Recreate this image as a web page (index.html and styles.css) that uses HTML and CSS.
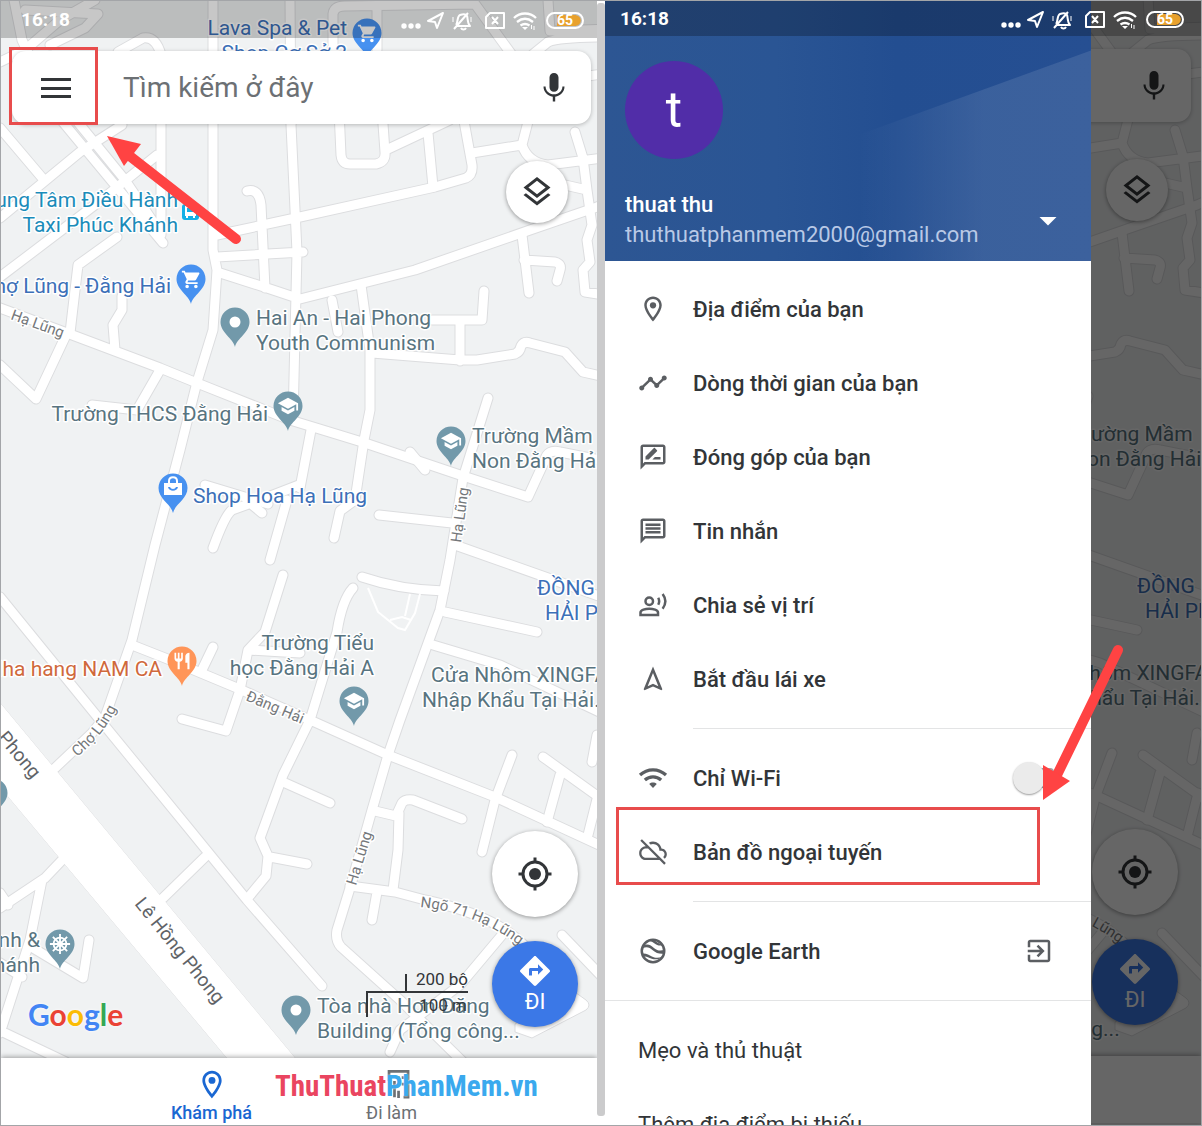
FILE: index.html
```html
<!DOCTYPE html>
<html lang="vi">
<head>
<meta charset="utf-8">
<meta name="viewport" content="width=device-width, initial-scale=1">
<title>Bản đồ ngoại tuyến</title>
<link rel="stylesheet" href="styles.css">
</head>
<body>
<svg class="sprite" aria-hidden="true">
  <defs>
    <symbol id="i-place" viewBox="0 0 24 24"><path d="M12 2C8.13 2 5 5.13 5 9c0 5.25 7 13 7 13s7-7.75 7-13c0-3.87-3.13-7-7-7zM7 9c0-2.76 2.24-5 5-5s5 2.24 5 5c0 2.88-2.88 7.19-5 9.88C9.92 16.21 7 11.85 7 9z"/><circle cx="12" cy="9" r="2.5"/></symbol>
    <symbol id="i-timeline" viewBox="0 0 24 24"><path d="M23 8c0 1.1-.9 2-2 2-.18 0-.35-.02-.51-.07l-3.56 3.55c.05.16.07.34.07.52 0 1.1-.9 2-2 2s-2-.9-2-2c0-.18.02-.36.07-.52l-2.55-2.55c-.16.05-.34.07-.52.07s-.36-.02-.52-.07l-4.55 4.56c.05.16.07.33.07.51 0 1.1-.9 2-2 2s-2-.9-2-2 .9-2 2-2c.18 0 .35.02.51.07l4.56-4.55C8.02 9.36 8 9.18 8 9c0-1.1.9-2 2-2s2 .9 2 2c0 .18-.02.36-.07.52l2.55 2.55c.16-.05.34-.07.52-.07s.36.02.52.07l3.55-3.56C19.02 8.35 19 8.18 19 8c0-1.1.9-2 2-2s2 .9 2 2z"/></symbol>
    <symbol id="i-review" viewBox="0 0 24 24"><path d="M20 2H4c-1.1 0-2 .9-2 2v18l4-4h14c1.1 0 2-.9 2-2V4c0-1.1-.9-2-2-2zm0 14H5.2L4 17.2V4h16v12z"/><path d="M6 14v-2.5l6.7-6.7c.2-.2.6-.2.8 0l1.7 1.7c.2.2.2.6 0 .8L8.5 14zM11.500 14l2-2H18v2z"/></symbol>
    <symbol id="i-message" viewBox="0 0 24 24"><path d="M4 4h16v12H5.17L4 17.17V4m0-2c-1.1 0-1.99.9-1.99 2L2 22l4-4h14c1.1 0 2-.9 2-2V4c0-1.1-.9-2-2-2H4zm2 10h12v2H6v-2zm0-3h12v2H6V9zm0-3h12v2H6V6z"/></symbol>
    <symbol id="i-share" viewBox="0 0 24 24"><g fill="none" stroke="currentColor" stroke-width="2"><circle cx="9" cy="9" r="3"/><path d="M2 20v-2c0-2 4-3 7-3s7 1 7 3v2z"/><path d="M16.200 6.200c.9 1.700.9 3.900 0 5.600M19.700 3.200c2.700 3.600 2.700 8.100 0 11.700"/></g></symbol>
    <symbol id="i-drive" viewBox="0 0 24 24"><path d="M12 7.270l4.280 10.430-3.470-1.530-.81-.36-.81.36-3.470 1.530L12 7.270M12 2L4.500 20.290l.71.71L12 18l6.790 3 .71-.71L12 2z"/></symbol>
    <symbol id="i-wifi" viewBox="0 0 24 24"><g fill="none" stroke="currentColor" stroke-width="2.600"><path d="M1.600 9.600C7.600 4 16.400 4 22.400 9.600M5.500 13.600c3.700-3.400 9.300-3.400 13 0"/></g><path d="M9 16.800c1.700-1.500 4.300-1.500 6 0L12 20z"/></symbol>
    <symbol id="i-cloud-off" viewBox="-1 0 26 26"><path d="M24 15c0-2.640-2.050-4.780-4.650-4.960C18.670 6.590 15.640 4 12 4c-1.330 0-2.570.36-3.650.97l1.490 1.490C10.510 6.170 11.230 6 12 6c3.040 0 5.500 2.460 5.500 5.500v.5H19c1.660 0 3 1.340 3 3 0 .99-.48 1.850-1.210 2.400l1.410 1.410C23.290 17.890 24 16.540 24 15zM2.400 1.850L1 3.260l4.770 4.780h-.42C2.340 8.360 0 10.910 0 14c0 3.310 2.690 6 6 6h11.730l4 4 1.410-1.410zM6 18c-2.210 0-4-1.790-4-4s1.790-4 4-4h1.730l8 8H6z"/></symbol>
    <symbol id="i-earth" viewBox="0 0 24 24"><circle cx="12" cy="12" r="9" fill="none" stroke="currentColor" stroke-width="2"/><path d="M3.500 8C8 5.500 10 7.500 13 9.800s5.500 2.400 8.500.7l-.3 3.500c-4 .6-6.700-.5-9.400-2.700S7 8.200 3.500 9.900zM8 3.200c3.500-.6 5.300.6 7.600 1.900s3.600 1.400 4 2.300c-2.500.7-4.300.1-6.600-1.600S9.700 3.900 8 3.200zM2.800 14c3.700-.5 6 1 8.300 2.300s4.900 1.600 8.400.3c-2 2-5.500 2.600-8.500 1.600s-4.600-2.200-6.400-1.600z"/></symbol>
    <symbol id="i-exit" viewBox="0 0 24 24"><path d="M19 3H5c-1.110 0-2 .9-2 2v4h2V5h14v14H5v-4H3v4c0 1.100.89 2 2 2h14c1.100 0 2-.9 2-2V5c0-1.100-.9-2-2-2zM10.090 15.590L11.500 17l5-5-5-5-1.410 1.410L12.670 11H3v2h9.670l-2.580 2.590z"/></symbol>
    <symbol id="i-mic" viewBox="0 0 24 24"><path d="M12 14.500c1.700 0 3-1.340 3-3V5c0-1.660-1.300-3-3-3S9 3.340 9 5v6.500c0 1.660 1.300 3 3 3zM17.600 11c0 3-2.500 5.200-5.600 5.200S6.400 14 6.400 11H5c0 3.500 2.700 6.300 6.200 6.800V21h1.600v-3.200c3.500-.5 6.200-3.300 6.200-6.800z"/></symbol>
    <symbol id="i-layers" viewBox="0 0 24 24"><path d="M11.990 18.540l-7.370-5.730L3 14.070l9 7 9-7-1.630-1.270zM12 16l7.360-5.730L21 9l-9-7-9 7 1.630 1.270L12 16zm0-11.470L17.740 9 12 13.470 6.260 9 12 4.530z"/></symbol>
    <symbol id="i-locate" viewBox="0 0 24 24"><circle cx="12" cy="12" r="4"/><g fill="none" stroke="currentColor" stroke-width="2"><circle cx="12" cy="12" r="8"/><path d="M12 1v3M12 20v3M1 12h3M20 12h3"/></g></symbol>
    <symbol id="i-go" viewBox="0 0 24 24"><path d="M21.710 11.290l-9-9c-.39-.39-1.020-.39-1.410 0l-9 9c-.39.39-.39 1.020 0 1.410l9 9c.39.39 1.020.39 1.410 0l9-9c.39-.38.39-1.010 0-1.410zM14 14.500V12h-4v3H8v-4c0-.55.45-1 1-1h5V7.500l3.500 3.500-3.500 3.500z"/></symbol>
    <symbol id="i-building" viewBox="0 0 24 32"><path d="M1 12V1.500h21V30h-5M7 30V12" fill="none" stroke="currentColor" stroke-width="3"/><path d="M10 7h3v3h-3zM15 7h3v3h-3zM10 14h3v3h-3zM15 14h3v3h-3zM10 23h3v8h-3z"/></symbol>
    <symbol id="i-cart" viewBox="0 0 24 24"><path d="M7 18c-1.100 0-2 .9-2 2s.9 2 2 2 2-.9 2-2-.9-2-2-2zM1 2v2h2l3.600 7.590L5.250 14c-.9 1.500.2 3 1.750 3h12v-2H7.400l.8-2h7.400c.75 0 1.400-.4 1.750-1l3.600-6.500c.4-.7-.1-1.500-.95-1.500H5.210l-.94-2H1zm16 16c-1.100 0-2 .9-2 2s.9 2 2 2 2-.9 2-2-.9-2-2-2z"/></symbol>
    <symbol id="i-school" viewBox="0 0 24 24"><path d="M5 13.180v4L12 21l7-3.820v-4L12 17l-7-3.820zM12 3L1 9l11 6 9-4.910V17h2V9L12 3z"/></symbol>
    <symbol id="i-food" viewBox="0 0 24 24"><path d="M11 9H9V2H7v7H5V2H3v7c0 2.120 1.660 3.840 3.750 3.970V22h2.500v-9.030C11.340 12.840 13 11.120 13 9V2h-2v7zm5-3v8h2.500v8H21V2c-2.760 0-5 2.240-5 4z"/></symbol>
    <symbol id="i-bag" viewBox="0 0 24 24"><path fill-rule="evenodd" d="M3 9h18v12H3zM7 13c1 5 9 5 10 0h-2c-1 2.500-5 2.500-6 0z"/><path d="M8 9V7c0-5 8-5 8 0v2" fill="none" stroke="currentColor" stroke-width="2"/></symbol>
    <symbol id="i-wheel" viewBox="0 0 24 24"><g fill="none" stroke="currentColor" stroke-width="2"><circle cx="12" cy="12" r="7"/><path d="M12 1v22M1 12h22M4.200 4.200l15.600 15.600M19.800 4.200L4.200 19.800"/></g><circle cx="12" cy="12" r="3"/></symbol>

    <symbol id="status-icons" viewBox="0 0 186 20" overflow="visible">
      <g fill="currentColor"><circle cx="4" cy="16" r="2.700"/><circle cx="11" cy="16" r="2.700"/><circle cx="18" cy="16" r="2.700"/></g>
      <g fill="none" stroke="currentColor" stroke-width="2" stroke-linejoin="round">
        <path d="M28 11L43 3l-6 15-2-6z"/>
        <path d="M56 15c2-2 1-9 4-10s6-1 7 1 0 7 3 10H57M61 18c1 2 4 2 5 0M54 19L68 3"/>
        <path d="M53 7v5M71 7v5" stroke-width="1"/>
        <path d="M90 3h14v15H86V7zM92 7l6 7M98 7l-6 7"/>
        <path d="M114 8c6-6 16-6 22 0M117 12c5-4 11-4 16 0M120.500 15.500c3-2 6-2 9 0" stroke-width="2.300"/>
      </g>
      <path d="M122 17h6l-3 3zM131 15h1v4h-1zM133.500 16h1v4h-1z" fill="currentColor"/>
      <path d="M157 5h17c9 0 9 11 0 11h-17z" fill="#e8a12d"/>
      <rect x="147" y="3" width="36" height="15" rx="7.500" fill="none" stroke="currentColor" stroke-width="2"/>
      <text class="battery-level" x="165" y="15" text-anchor="middle">65</text>
    </symbol>

    <path id="pin" d="M0 25C-2 16-14.500 11-14.500 0a14.500 14.500 0 0 1 29 0C14.500 11 2 16 0 25z"/>
    <path id="ngo-71" d="M420 907Q484 914 530 954"/>
    <path id="cho-lung" d="M77 757Q108 731 119 702"/>

    <g id="roads">
      <path d="M14 0L22 40L57 115L163 243M72 115L125 180L160 232M0 62L25 50L60 20L95 0M25 10L98 14L85 28L50 45M0 128L44 180M0 218L80 152L122 125M0 277L100 201L157 155M118 52L143 38Q156 36 161 55L161 235M117 237L78 265L75 290L70 333"/>
      <path d="M213 0L213 250L217 270L213 330L197 382L180 450L155 545L132 640L105 717L92 733L55 768M247 191Q259 188 261 205L265 288M290 0L291 125L297 252L293 420M217 257L303 252M217 235L300 217L435 187L466 178Q473 175 472 165L462 110M217 272L267 288L300 299L415 270L530 230L597 207L608 202"/>
      <path d="M333 60L333 14Q334 6 345 6L475 4L512 55M377 10L377 50M339 110L341 155Q342 164 350 164L376 164Q386 162 385 152L382 110M386 150L450 120M428 133L433 187M472 153L522 145M531 110L522 145Q528 163 548 165L610 157M575 132L583 158L587 190L592 225L587 240L590 262L583 270L585 292L610 296M565 185L587 190M548 0L550 31L610 29M532 55L548 42Q560 37 610 37M588 76L610 73"/>
      <path d="M522 235L529 293M524 260L555 262Q562 264 560 270L557 281M432 320L482 320L484 291M460 320L460 361M372 353L460 360L477 360L515 354Q520 352 521 346Q524 341 530 343L565 352L583 372L610 378M361 285L370 350L370 410L364 440L355 500L340 511L334 538M332 300L338 332M488 398L463 478L450 560L440 610L400 720L388 755L372 810L350 888L337 930Q335 940 341 947L400 1000L463 1062M379 515L452 523"/>
      <path d="M0 308L67 333L160 368L197 383L290 420L313 427L362 442L460 475L528 497L545 460Q547 449 560 452L610 462M67 333L36 399L0 365M122 296L122 310L113 325L115 350M160 370L137 410L92 405M311 430L300 488M299 485L268 497L232 510Q225 515 213 548M287 500L270 560M250 503L262 513"/>
      <path d="M455 545L610 600M362 577Q400 590 444 591M445 612L537 632M433 645L500 665L610 717M353 588Q342 600 337 632L310 720L283 775L260 838L268 856L266 876L247 899M270 857L307 864M132 645L165 658L237 688L310 720L388 755L495 797L610 850M213 647L201 672M283 575L265 632L248 650L240 690L226 731L182 719M248 650L300 653M283 782L330 803"/>
      <path d="M0 597L100 720L190 830L247 900L322 986M163 898L205 857M512 755L495 800L482 852M543 757L610 805M560 775L547 822M597 735L592 762M598 795L588 835M375 811L396 816L402 803Q405 799 413 800L462 819M399 813L398 850L393 890M350 886L395 892L425 900Q495 915 525 946M377 892L372 920M502 935L460 985L400 1030L390 1052M562 935L610 985M425 470L410 452M205 485L268 504"/>
      <path d="M65 857L45 878L0 908M42 880L30 940L0 1033M0 893L8 905M33 948L83 978L89 940M0 963L22 977M5 1033L66 1062"/>
    </g>

    <g id="city-map">
      <rect class="land" width="620" height="1130"/>
      <use href="#roads" class="road-casing"/>
      <path class="avenue" d="M-4 698L295 1058L300 1064L232 1064L-4 782z"/>
      <use href="#roads" class="road-surface"/>
      <path class="avenue-fill" d="M-4 698L300 1064L232 1064L-4 782z"/>
      <path class="avenue" d="M515 1024V1032L532 1038L586 1010Q592 1005 586 1000L572 990z"/>
      <path class="footpath" d="M368 588L378 612L398 628L405 630L415 613L420 594M390 620L402 617L411 620M405 616L410 594"/>

      <g class="street">
        <text transform="translate(10 319) rotate(20)">Hạ Lũng</text>
        <text transform="translate(461 543) rotate(-82)">Hạ Lũng</text>
        <text transform="translate(245 700) rotate(23)">Đằng Hải</text>
        <text><textPath href="#cho-lung">Chợ Lũng</textPath></text>
        <text transform="translate(356 886) rotate(-73)">Hạ Lũng</text>
        <text><textPath href="#ngo-71">Ngõ 71 Hạ Lũng</textPath></text>
      </g>
      <g class="street street-major">
        <text transform="translate(-3 738) rotate(50)">Phong</text>
        <text transform="translate(134 904) rotate(51)">Lê Hồng Phong</text>
      </g>

      <g class="poi shop">
        <text x="347" y="35" text-anchor="end">Lava Spa &amp; Pet</text>
        <text x="347" y="60" text-anchor="end">Shop Cơ Sở 2</text>
        <text x="171" y="293" text-anchor="end">Chợ Lũng - Đằng Hải</text>
        <text x="193" y="503">Shop Hoa Hạ Lũng</text>
        <text x="537" y="595">ĐỒNG</text>
        <text x="545" y="620">HẢI PHÒNG</text>
      </g>
      <g class="poi transit">
        <text x="178" y="207" text-anchor="end">Trung Tâm Điều Hành</text>
        <text x="178" y="232" text-anchor="end">Taxi Phúc Khánh</text>
      </g>
      <g class="poi place">
        <text x="256" y="325">Hai An - Hai Phong</text>
        <text x="256" y="350">Youth Communism</text>
        <text x="268" y="421" text-anchor="end">Trường THCS Đằng Hải</text>
        <text x="472" y="443">Trường Mầm</text>
        <text x="472" y="468">Non Đằng Hải</text>
        <text x="374" y="650" text-anchor="end">Trường Tiểu</text>
        <text x="374" y="675" text-anchor="end">học Đằng Hải A</text>
        <text x="431" y="682">Cửa Nhôm XINGFA</text>
        <text x="422" y="707">Nhập Khẩu Tại Hải...</text>
        <text x="40" y="947" text-anchor="end">Bình &amp;</text>
        <text x="40" y="972" text-anchor="end">Khánh</text>
        <text x="317" y="1013">Tòa nhà Hơn Đăng</text>
        <text x="317" y="1038">Building (Tổng công...</text>
      </g>
      <g class="poi food"><text x="162" y="676" text-anchor="end">Nha hang NAM CA</text></g>

      <g class="pin-shop">
        <use href="#pin" x="367" y="33"/><use href="#pin" x="191" y="279"/><use href="#pin" x="173" y="488"/>
      </g>
      <g class="pin-place">
        <use href="#pin" x="235" y="322"/><use href="#pin" x="288" y="406"/><use href="#pin" x="451" y="441"/><use href="#pin" x="354" y="701"/><use href="#pin" x="60" y="944"/><use href="#pin" x="296" y="1010"/><use href="#pin" x="-7" y="793"/>
      </g>
      <g class="pin-food"><use href="#pin" x="182" y="661"/></g>
      <rect class="pin-transit" x="182" y="204" width="17" height="16" rx="3"/>
      <g class="pin-glyph">
        <path d="M185 206h11v10h-1v2h-2v-2h-5v2h-2v-2h-1z"/>
        <use href="#i-cart" x="357" y="23" width="21" height="21"/>
        <use href="#i-cart" x="181" y="269" width="21" height="21"/>
        <use href="#i-bag" x="161" y="474" width="24" height="24"/>
        <circle cx="235" cy="322" r="5.500"/><circle cx="296" cy="1010" r="5.500"/>
        <use href="#i-school" x="277" y="395" width="22" height="22"/>
        <use href="#i-school" x="440" y="430" width="22" height="22"/>
        <use href="#i-school" x="343" y="690" width="22" height="22"/>
        <use href="#i-food" x="172" y="651" width="20" height="20"/>
        <use href="#i-wheel" x="49" y="933" width="22" height="22"/>
      </g>
      <path class="transit-window" d="M187 208h7v4h-7z"/>
    </g>
  </defs>
</svg>

<div class="screens">
  <section class="phone">
    <div class="app">
      <svg class="map" role="img" aria-label="Bản đồ Đằng Hải, Hải Phòng"><use href="#city-map" x="-1" y="-1"/></svg>
      <header class="status status-light">
        <time>16:18</time>
        <svg class="status-icons"><use href="#status-icons"/></svg>
      </header>
      <form class="search">
        <button class="search-menu marked" type="button" aria-label="Menu"><span class="bars"></span></button>
        <input class="search-field" type="text" placeholder="Tìm kiếm ở đây" aria-label="Tìm kiếm">
        <button class="search-mic" type="button" aria-label="Giọng nói"><svg class="icon-large"><use href="#i-mic"/></svg></button>
      </form>
      <div class="controls">
        <button class="round round-small" aria-label="Lớp bản đồ"><svg class="icon-large"><use href="#i-layers"/></svg></button>
        <div class="controls-bottom">
          <div class="google"><span class="g-blue">G</span><span class="g-red">o</span><span class="g-yellow">o</span><span class="g-blue">g</span><span class="g-green">l</span><span class="g-red">e</span></div>
          <div class="scale"><span class="scale-feet">200 bộ</span><span class="scale-metres">100 m</span></div>
          <div class="round-stack">
            <button class="round" aria-label="Vị trí của tôi"><svg class="icon-large"><use href="#i-locate"/></svg></button>
            <button class="round round-go"><svg class="icon-large"><use href="#i-go"/></svg><span>ĐI</span></button>
          </div>
        </div>
      </div>
      <nav class="tabs">
        <a class="tab tab-active" href="#explore"><svg class="icon-large"><use href="#i-place"/></svg>Khám phá</a>
        <a class="tab" href="#commute"><svg class="icon-large icon-building"><use href="#i-building"/></svg>Đi làm</a>
        <div class="watermark"><span class="mark-red">ThuThuat</span><span class="mark-blue">PhanMem.vn</span></div>
      </nav>
      <svg class="arrow arrow-menu" viewBox="0 0 140 112" aria-hidden="true"><path d="M24 21L129 103" class="arrow-shaft"/><path d="M0 0L34 8L17 30z" class="arrow-head"/></svg>
    </div>
  </section>

  <div class="scrollbar"></div>

  <section class="phone">
    <div class="app app-behind">
      <svg class="map" aria-hidden="true"><use href="#city-map" x="-1" y="-1"/></svg>
      <div class="status"></div>
      <div class="search">
        <button class="search-mic" type="button" aria-label="Giọng nói"><svg class="icon-large"><use href="#i-mic"/></svg></button>
      </div>
      <div class="controls">
        <button class="round round-small" aria-label="Lớp bản đồ"><svg class="icon-large"><use href="#i-layers"/></svg></button>
        <div class="controls-bottom">
          <div class="round-stack">
            <button class="round" aria-label="Vị trí của tôi"><svg class="icon-large"><use href="#i-locate"/></svg></button>
            <button class="round round-go"><svg class="icon-large"><use href="#i-go"/></svg><span>ĐI</span></button>
          </div>
        </div>
      </div>
      <div class="tabs"></div>
    </div>
    <div class="scrim"></div>
    <aside class="drawer">
      <header class="account">
        <div class="avatar">t</div>
        <div class="account-row">
          <div>
            <div class="account-name">thuat thu</div>
            <div class="account-mail">thuthuatphanmem2000@gmail.com</div>
          </div>
          <button class="account-switch" aria-label="Chuyển tài khoản"></button>
        </div>
      </header>
      <ul class="menu">
        <li><a href="#places"><svg class="icon"><use href="#i-place"/></svg>Địa điểm của bạn</a></li>
        <li><a href="#timeline"><svg class="icon"><use href="#i-timeline"/></svg>Dòng thời gian của bạn</a></li>
        <li><a href="#contribute"><svg class="icon"><use href="#i-review"/></svg>Đóng góp của bạn</a></li>
        <li><a href="#messages"><svg class="icon"><use href="#i-message"/></svg>Tin nhắn</a></li>
        <li><a href="#share"><svg class="icon"><use href="#i-share"/></svg>Chia sẻ vị trí</a></li>
        <li><a href="#drive"><svg class="icon"><use href="#i-drive"/></svg>Bắt đầu lái xe</a></li>
      </ul>
      <ul class="menu menu-inset">
        <li><label for="wifi-only"><svg class="icon"><use href="#i-wifi"/></svg>Chỉ Wi-Fi<input class="toggle" id="wifi-only" type="checkbox"></label></li>
        <li class="marked"><a href="#offline"><svg class="icon"><use href="#i-cloud-off"/></svg>Bản đồ ngoại tuyến</a></li>
      </ul>
      <ul class="menu menu-inset">
        <li><a href="#earth"><svg class="icon"><use href="#i-earth"/></svg>Google Earth<svg class="icon icon-end"><use href="#i-exit"/></svg></a></li>
      </ul>
      <ul class="menu menu-plain">
        <li><a href="#tips">Mẹo và thủ thuật</a></li>
        <li><a href="#missing">Thêm địa điểm bị thiếu</a></li>
      </ul>
    </aside>
    <header class="status status-over">
      <time>16:18</time>
      <svg class="status-icons"><use href="#status-icons"/></svg>
    </header>
    <svg class="arrow arrow-offline" viewBox="0 0 86 160" aria-hidden="true"><path d="M14 133L75 8" class="arrow-shaft"/><path d="M0 158V123L27 139z" class="arrow-head"/></svg>
  </section>
</div>
</body>
</html>
```
FILE: styles.css
```css
* { box-sizing: border-box; }

body {
  margin: 0;
  font-family: Roboto, "Noto Sans", sans-serif;
  color: #323538;
}

button { border: 0; padding: 0; background: none; font: inherit; color: inherit; }
a { color: inherit; text-decoration: none; }
svg { fill: currentColor; display: block; }
.sprite { position: absolute; width: 0; height: 0; }

.screens {
  display: grid;
  grid-template-columns: 1fr 8px 1fr;
  height: 100vh;
  overflow: hidden;
  border: 1px solid #a3a5a8;
  background: #fff;
}
.scrollbar { margin: 2px 0 9px; border-radius: 3px; background: #cbcbcc; }
.phone { position: relative; min-width: 0; overflow: hidden; background: #fff; }
.app { position: relative; display: flex; flex-direction: column; height: 100%; }
.app-behind { position: absolute; inset: -2px 4px 2px -4px; height: auto; }

/* Status bar */
.status {
  position: relative;
  flex: none;
  display: flex;
  justify-content: space-between;
  align-items: center;
  height: 37px;
  padding: 0 11px 0 20px;
  color: #fff;
}
.status time { font-size: 19px; font-weight: 700; }
.status-light { background: rgba(0, 0, 0, .22); }
.status-over { position: absolute; inset: 0 0 auto; height: 35px; padding: 0 15px; background: rgba(0, 0, 0, .25); }
.status-icons { width: 186px; height: 20px; overflow: visible; }
.battery-level { font-size: 14px; font-weight: 700; }

/* Search box */
.search {
  position: relative;
  flex: none;
  display: flex;
  align-items: center;
  height: 73px;
  margin: 13px 6px 0 11px;
  border-radius: 14px;
  background: #fff;
  box-shadow: 0 1px 4px rgba(0, 0, 0, .25);
}
.search-menu { position: relative; width: 88px; height: 73px; padding-left: 29px; }
.search-menu.marked::after { inset: -4px 2px -1px -3px; }
.bars { display: block; width: 30px; height: 20px; border: solid #323538; border-width: 3px 0; }
.bars::after { content: ""; display: block; height: 3px; margin-top: 6px; background: #323538; }
.search-field {
  flex: 1;
  min-width: 0;
  height: 60px;
  margin-left: 23px;
  padding: 0;
  border: 0;
  outline: 0;
  background: none;
  font: 400 28px Roboto, "Noto Sans", sans-serif;
}
.search-field::placeholder { color: #6c7074; opacity: 1; }
.search-mic { margin: 0 19px 0 auto; }
.icon-large { width: 36px; height: 36px; }

/* Floating map controls */
.controls { position: relative; flex: 1; display: flex; flex-direction: column; padding: 37px 19px 31px 27px; }
.controls-bottom { display: flex; align-items: flex-end; justify-content: flex-end; margin-top: auto; }
.round {
  display: flex;
  flex-direction: column;
  align-items: center;
  justify-content: center;
  width: 86px;
  height: 86px;
  border-radius: 50%;
  background: #fff;
  box-shadow: 0 1px 4px rgba(0, 0, 0, .4);
}
.round-small { width: 62px; height: 62px; align-self: flex-end; margin-right: 10px; }
.round-stack { display: grid; gap: 24px; }
.round-go { background: #3b78e7; color: #fff; font-size: 22px; line-height: 26px; }
.google { margin-right: auto; font-family: Lato, sans-serif; font-size: 30px; line-height: 26px; font-weight: 700; text-shadow: 0 0 3px #fff; }
.g-blue { color: #4285f4; }
.g-red { color: #ea4335; }
.g-yellow { color: #fbbc05; }
.g-green { color: #34a853; }
.scale { display: grid; width: 102px; margin: 0 24px 10px 0; font-size: 17px; line-height: 24px; text-align: right; }
.scale-feet { position: relative; border-bottom: 2px solid #323538; }
.scale-feet::before { content: ""; position: absolute; left: 39px; bottom: 0; height: 17px; border-left: 2px solid #323538; }
.scale-metres { padding-right: 1px; border-left: 2px solid #323538; }

/* Bottom tabs */
.tabs {
  position: relative;
  flex: none;
  display: flex;
  justify-content: center;
  height: 67px;
  padding-left: 5px;
  background: #fff;
  box-shadow: 0 -1px 5px rgba(0, 0, 0, .35);
}
.app-behind .tabs { margin: 0 -4px; }
.tab {
  display: flex;
  flex-direction: column;
  align-items: center;
  width: 180px;
  padding-top: 10px;
  font-size: 18px;
  line-height: 24px;
  color: #6c7074;
}
.tab-active { color: #1a67d2; font-weight: 500; }
.tab .icon-building { width: 24px; height: 32px; margin: 2px 0 2px 14px; }
.watermark {
  position: absolute;
  left: 274px;
  top: 10px;
  font: 700 29px/36px "Roboto Condensed", "Liberation Sans Narrow", "Liberation Sans", sans-serif;
  text-shadow: 0 0 2px #fff;
}
.mark-red { color: #ea4560; }
.mark-blue { color: #3aa9ee; }

/* Drawer */
.scrim { position: absolute; inset: 0; background: rgba(0, 0, 0, .6); }
.drawer { position: relative; width: min(486px, 82%); height: 100%; overflow: hidden; background: #fff; }
.account {
  position: relative;
  display: flex;
  flex-direction: column;
  height: 260px;
  padding: 60px 34px 0 20px;
  color: #fff;
  background: linear-gradient(90deg, #2d5693, #2a5594 35%, #234e91 60%, #264f92);
}
.account::before {
  content: "";
  position: absolute;
  inset: 0;
  background: linear-gradient(90deg, rgba(255, 255, 255, 0) 52%, rgba(255, 255, 255, .1) 78%);
  clip-path: polygon(50% 53%, 100% 19%, 100% 100%, 50% 100%);
}
.avatar {
  position: relative;
  width: 98px;
  height: 98px;
  border-radius: 50%;
  background: #512da8;
  font-size: 50px;
  line-height: 98px;
  text-align: center;
}
.account-row { position: relative; display: flex; justify-content: space-between; align-items: center; margin-top: 32px; }
.account-name { font-size: 22px; line-height: 28px; font-weight: 500; }
.account-mail { font-size: 22px; line-height: 32px; color: #b9c9e6; }
.account-switch { width: 18px; height: 9px; background: #fff; clip-path: polygon(0 0, 100% 0, 50% 100%); }

.menu { position: relative; margin: 0; padding: 12px 0; list-style: none; font-size: 22px; font-weight: 500; }
.menu:nth-of-type(1) { padding-top: 11px; }
.menu li { position: relative; }
.menu a, .menu label { display: flex; align-items: center; height: 74px; padding: 0 37px 0 33px; }
.menu-inset::before { content: ""; position: absolute; top: 0; left: 88px; right: 0; }
.menu-inset::before, .menu-plain { border-top: 1px solid #e3e4e5; }
.menu-inset { padding-top: 13px; }
.menu-plain { font-weight: 400; }
.icon { flex: none; width: 30px; height: 30px; margin-right: 25px; color: #5b5e62; }
.icon-end { margin: 0 0 0 auto; }
.toggle { appearance: none; position: relative; width: 41px; height: 32px; margin: 0 0 0 auto; }
.toggle::before { content: ""; position: absolute; inset: 6px 0 6px 8px; border-radius: 4px; background: #a3a5a8; }
.toggle::after { content: ""; position: absolute; left: 0; top: 0; width: 32px; height: 32px; border-radius: 50%; background: #ebebeb; box-shadow: 0 1px 2px rgba(0, 0, 0, .4); }

/* Callouts */
.marked::after { content: ""; position: absolute; inset: -8px 51px 4px 11px; border: 3px solid #e84c4c; }
.arrow { position: absolute; overflow: visible; }
.arrow-menu { left: 106px; top: 135px; width: 140px; height: 112px; }
.arrow-offline { right: 72px; top: 641px; width: 86px; height: 160px; }
.arrow-shaft { fill: none; stroke: #ff4343; stroke-width: 10px; stroke-linecap: round; }
.arrow-head { fill: #ff4343; }

/* Map */
.map { position: absolute; left: 0; top: 0; width: calc(100% + 4px); height: 100%; }
.land { fill: #f0f2f3; }
.road-casing, .road-surface { fill: none; stroke-linecap: round; stroke-linejoin: round; }
.road-casing { stroke: #dcdddf; stroke-width: 11px; }
.road-surface { stroke: #fff; stroke-width: 9px; }
.avenue { fill: #fff; stroke: #dcdddf; stroke-width: 1px; }
.avenue-fill { fill: #fff; }
.footpath { fill: none; stroke: #fff; stroke-width: 2px; }
.poi, .street { paint-order: stroke; stroke: #fff; stroke-width: 3px; stroke-linejoin: round; }
.poi { font-size: 21px; }
.street { font-size: 15px; fill: #75787b; }
.street-major { font-size: 19px; fill: #5f6367; }
.shop { fill: #3c70b8; }
.transit { fill: #1b8cba; }
.place { fill: #587480; }
.food { fill: #d0693c; }
.pin-shop { fill: #4791f0; }
.pin-place { fill: #7299aa; }
.pin-food { fill: #ff9558; }
.pin-transit { fill: #12b0e6; }
.pin-glyph { fill: #fff; color: #fff; }
.transit-window { fill: #12b0e6; }
```
